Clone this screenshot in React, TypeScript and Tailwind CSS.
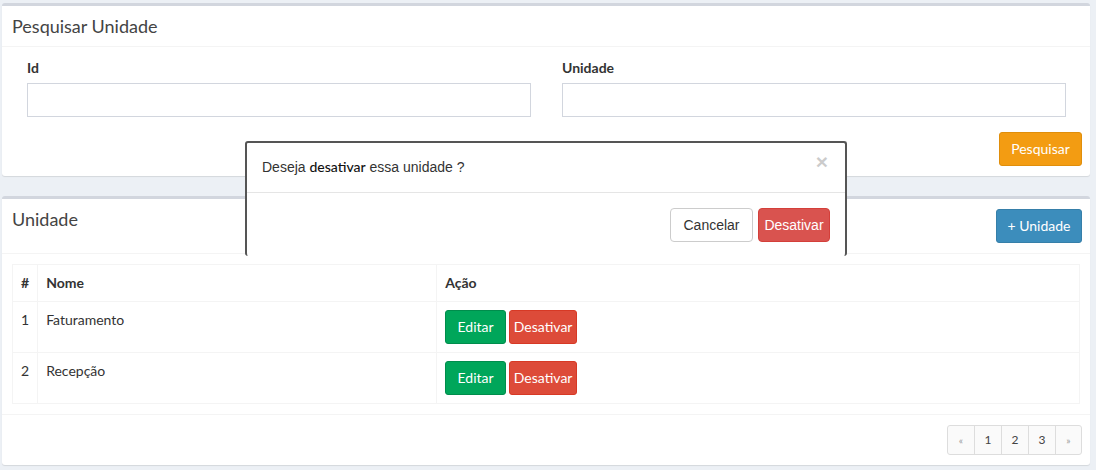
import React from "react";

const sans = "font-['Lato','Liberation_Sans',sans-serif]";
const arial = "font-['Liberation_Sans','Arial',sans-serif]";

function Btn({ children, className }: { children: React.ReactNode; className: string }) {
  return (
    <button
      className={`flex items-center justify-center whitespace-nowrap rounded-[3px] border p-0 text-[14px] leading-none text-white ${className}`}
    >
      {children}
    </button>
  );
}

export default function App() {
  const rows = [
    { id: 1, nome: "Faturamento" },
    { id: 2, nome: "Recepção" },
  ];
  return (
    <div className={`relative h-[470px] w-[1096px] overflow-hidden bg-[#ecf0f5] text-[#333] ${sans}`}>
      <div className="flex flex-col gap-[20px] pl-[2px] pr-[6px] pt-[3px]">
        {/* Search box */}
        <div className="rounded-[3px] border-t-[3px] border-[#d2d6de] bg-white shadow-[0_1px_1px_rgba(0,0,0,0.1)]">
          <div className="border-b border-[#f4f4f4] px-[10px] py-[10px]">
            <h3 className="text-[18px] leading-[20px] text-[#444]">Pesquisar Unidade</h3>
          </div>
          <div className="grid grid-cols-2 gap-[31px] pl-[25px] pr-[24px] pt-[11px]">
            <div className="flex flex-col">
              <label className="mb-[5px] text-[14px] font-bold leading-[20px]">Id</label>
              <input className="h-[34px] border border-[#d2d6de] bg-white" />
            </div>
            <div className="flex flex-col">
              <label className="mb-[5px] text-[14px] font-bold leading-[20px]">Unidade</label>
              <input className="h-[34px] border border-[#d2d6de] bg-white" />
            </div>
          </div>
          <div className="flex justify-end pb-[10px] pl-[9px] pr-[8px] pt-[15px]">
            <Btn className="h-[34px] w-[83px] border-[#e08e0b] bg-[#f39c12]">Pesquisar</Btn>
          </div>
        </div>

        {/* List box */}
        <div className="rounded-[3px] border-t-[3px] border-[#d2d6de] bg-white shadow-[0_1px_1px_rgba(0,0,0,0.1)]">
          <div className="flex items-start justify-between border-b border-[#f4f4f4] pb-[10px] pl-[10px] pr-[8px] pt-[10px]">
            <h3 className="text-[18px] leading-[20px] text-[#444]">Unidade</h3>
            <Btn className="h-[34px] w-[86px] border-[#367fa9] bg-[#3c8dbc]">+ Unidade</Btn>
          </div>
          <div className="px-[10px] py-[10px]">
            <table className="w-full border-collapse border border-[#f4f4f4] text-[14px] leading-[20px]">
              <thead>
                <tr>
                  <th className="w-[25px] border border-[#f4f4f4] p-[8px] text-left font-bold">#</th>
                  <th className="w-[399px] border border-[#f4f4f4] p-[8px] text-left font-bold">Nome</th>
                  <th className="border border-[#f4f4f4] p-[8px] text-left font-bold">Ação</th>
                </tr>
              </thead>
              <tbody>
                {rows.map((r) => (
                  <tr key={r.id}>
                    <td className="border border-[#f4f4f4] p-[8px] align-top">{r.id}</td>
                    <td className="border border-[#f4f4f4] p-[8px] align-top">{r.nome}</td>
                    <td className="border border-[#f4f4f4] p-[8px] align-top">
                      <div className="flex gap-[3px]">
                        <Btn className="h-[34px] w-[61px] border-[#008d4c] bg-[#00a65a]">Editar</Btn>
                        <Btn className="h-[34px] w-[68px] border-[#d73925] bg-[#dd4b39]">Desativar</Btn>
                      </div>
                    </td>
                  </tr>
                ))}
              </tbody>
            </table>
          </div>
          <div className="flex justify-end border-t border-[#f4f4f4] py-[10px] pl-[9px] pr-[8px]">
            <div className="flex overflow-hidden rounded-[3px] border border-[#ddd] bg-[#fafafa] text-[12px] leading-[18px]">
              <span className="flex h-[28px] w-[26px] items-center justify-center text-[10px] text-[#999]">«</span>
              <span className="flex h-[28px] w-[27px] items-center justify-center border-l border-[#ddd] text-[#444]">1</span>
              <span className="flex h-[28px] w-[27px] items-center justify-center border-l border-[#ddd] text-[#444]">2</span>
              <span className="flex h-[28px] w-[27px] items-center justify-center border-l border-[#ddd] text-[#444]">3</span>
              <span className="flex h-[28px] w-[26px] items-center justify-center border-l border-[#ddd] text-[10px] text-[#999]">»</span>
            </div>
          </div>
        </div>
      </div>

      {/* Modal */}
      <div className="absolute left-[245px] top-[141px] w-[602px] rounded-[3px] border-2 border-b-0 border-[#555] bg-white">
        <div className="relative border-b border-[#e5e5e5] px-[15px] pb-[15px] pt-[14px]">
          <p className={`text-[14px] leading-[20px] text-[#333] ${arial}`}>
            Deseja <span className={`${sans} font-medium text-[#111]`}>desativar</span> essa unidade ?
          </p>
          <span className={`absolute right-[17px] top-[8px] text-[21px] font-bold leading-[21px] text-black opacity-20 ${arial}`}>×</span>
        </div>
        <div className="flex justify-end gap-[5px] px-[15px] pb-[14px] pt-[15px]">
          <button className={`h-[34px] w-[83px] rounded-[4px] border border-[#ccc] bg-white text-[14px] text-[#333] ${arial}`}>Cancelar</button>
          <button className={`h-[34px] w-[72px] rounded-[4px] border border-[#d43f3a] bg-[#d9534f] text-[14px] text-white ${arial}`}>Desativar</button>
        </div>
      </div>
    </div>
  );
}
